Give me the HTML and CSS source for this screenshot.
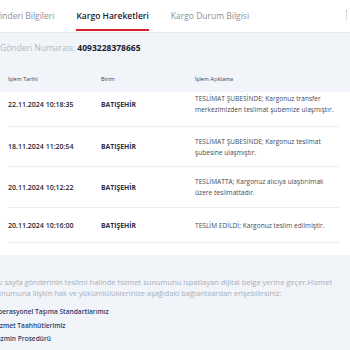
FILE: index.html
```html
<!DOCTYPE html>
<html lang="tr">
<head>
    <meta charset="UTF-8">
    <meta name="viewport" content="width=device-width, initial-scale=1.0">
    <title>Kargo Hareketleri</title>
    <link rel="stylesheet" href="styles.css">
</head>
<body>
    <div class="page">
        <div class="tabs">
            <div class="tab">Gönderi Bilgileri</div>
            <div class="tab active">Kargo Hareketleri</div>
            <div class="tab">Kargo Durum Bilgisi</div>
            <span class="more"></span>
        </div>

        <div class="content">
            <div class="shipment">Gönderi Numarası: <strong>4093228378665</strong></div>

            <div class="moves">
                <div class="row head">
                    <div>İşlem Tarihi</div>
                    <div>Birim</div>
                    <div>İşlem Açıklama</div>
                </div>
                <div class="body">
                    <div class="row r1">
                        <div class="date">22.11.2024 10:18:35</div>
                        <div class="unit">BATIŞEHİR</div>
                        <div class="desc">TESLİMAT ŞUBESİNDE; Kargonuz transfer<br>merkezimizden teslimat şubemize ulaşmıştır.</div>
                    </div>
                    <div class="row r2">
                        <div class="date">18.11.2024 11:20:54</div>
                        <div class="unit">BATIŞEHİR</div>
                        <div class="desc">TESLİMAT ŞUBESİNDE; Kargonuz teslimat<br>şubesine ulaşmıştır.</div>
                    </div>
                    <div class="row r3">
                        <div class="date">20.11.2024 10:12:22</div>
                        <div class="unit">BATIŞEHİR</div>
                        <div class="desc">TESLİMATTA; Kargonuz alıcıya ulaştırılmak<br>üzere teslimattadır.</div>
                    </div>
                    <div class="row r4">
                        <div class="date">20.11.2024 10:16:00</div>
                        <div class="unit">BATIŞEHİR</div>
                        <div class="desc">TESLİM EDİLDİ; Kargonuz teslim edilmiştir.</div>
                    </div>
                </div>
            </div>

            <p class="note">Bu sayfa gönderinin teslimi halinde hizmet sunumunu ispatlayan dijital belge yerine geçer.Hizmet<br>sunumuna ilişkin hak ve yükümlülüklerinize aşağıdaki bağlantılardan erişebilirsiniz:</p>
            <ul class="links">
                <li><a href="#">Operasyonel Taşıma Standartlarımız</a></li>
                <li><a href="#">Hizmet Taahhütlerimiz</a></li>
                <li><a href="#">Tazmin Prosedürü</a></li>
            </ul>
        </div>
    </div>
</body>
</html>
```

FILE: styles.css
```css
body {
    margin: 0;
    padding: 0;
    overflow: hidden;
    font-family: "Open Sans", Arial, sans-serif;
    background-color: #f1f4f9;
}
.page {
    width: 368px;
    margin-left: -9px;
}
.tabs {
    display: flex;
    align-items: flex-start;
    height: 33px;
    background-color: #ffffff;
    border-bottom: 1px solid #e8ebf0;
    box-sizing: border-box;
    position: relative;
}
.tab {
    padding: 10px 0 0;
    margin-right: 22px;
    font-size: 8.5px;
    color: #8c919c;
    height: 31px;
    box-sizing: border-box;
}
.tab.active {
    color: #1d2130;
    font-weight: 600;
    border-bottom: 2px solid #d3202e;
}
.more {
    position: absolute;
    right: 10px;
    top: 10px;
    width: 2px;
    height: 10px;
    border-left: 1px dotted #b5b9c3;
}
.content {
    padding-top: 9px;
}
.shipment {
    padding-left: 9px;
    font-size: 8.5px;
    line-height: 12px;
    color: #b3b8c4;
}
.shipment strong {
    color: #1d2130;
    font-weight: 700;
}
.moves {
    margin-top: 16px;
}
.row {
    display: grid;
    grid-template-columns: 93px 94px 1fr;
    align-items: center;
    margin: 0 19px 0 17px;
}
.head {
    font-size: 5.5px;
    color: #3a3e4c;
    height: 22px;
    padding-bottom: 4px;
    box-sizing: border-box;
}
.body {
    background-color: #ffffff;
    padding-bottom: 12px;
}
.body .row {
    border-bottom: 1px solid #eceef2;
    box-sizing: border-box;
}
.r1 { height: 35px; padding-bottom: 10px; }
.r2 { height: 40px; }
.r3 { height: 41px; }
.r4 { height: 35px; }
.date {
    font-size: 7px;
    font-weight: 600;
    color: #22252f;
}
.unit {
    font-size: 6.8px;
    font-weight: 700;
    color: #2b2f48;
}
.desc {
    font-size: 6.5px;
    letter-spacing: 0.05px;
    line-height: 11px;
    color: #444857;
    white-space: nowrap;
}
.note {
    margin: 22px 0 0;
    padding-left: 2px;
    font-size: 7.5px;
    line-height: 11px;
    color: #a9aebb;
    white-space: nowrap;
}
.links {
    list-style: none;
    margin: 6px 0 0;
    padding: 0 0 0 2px;
}
.links li {
    font-size: 6.6px;
    line-height: 13.5px;
}
.links a {
    color: #2c3c6e;
    text-decoration: none;
    font-weight: 600;
}
```
